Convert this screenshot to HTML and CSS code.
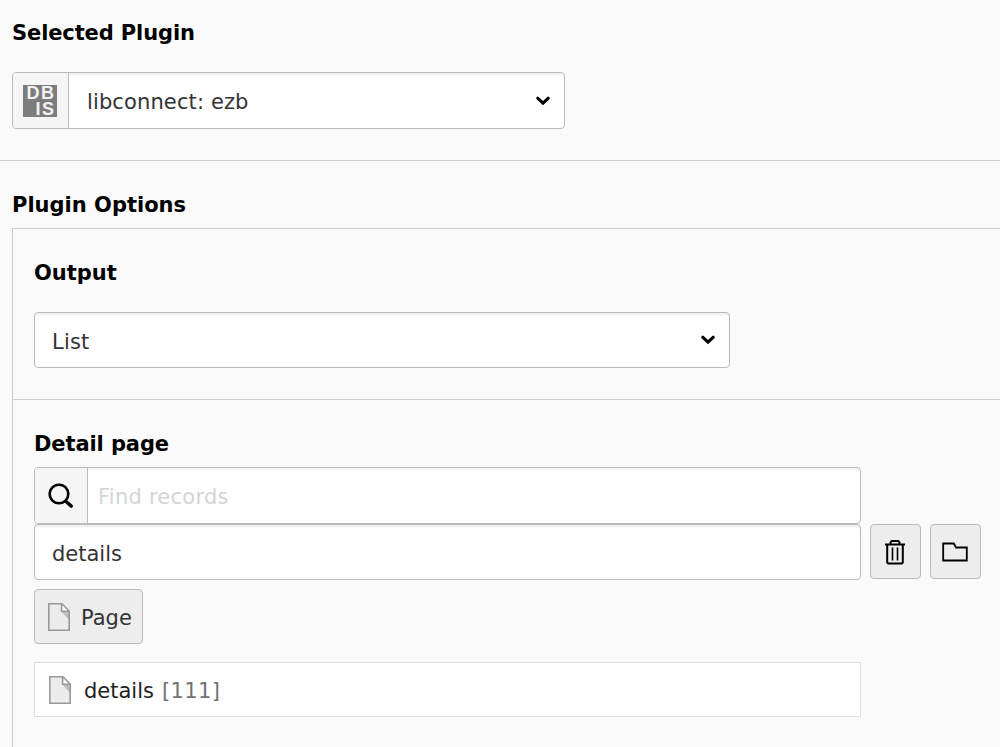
FILE: index.html
```html
<!DOCTYPE html>
<html lang="en">
<head>
<meta charset="utf-8">
<title>Plugin</title>
<link rel="stylesheet" href="styles.css">
</head>
<body>
<svg class="defs" width="0" height="0" aria-hidden="true">
  <symbol id="page" viewBox="0 0 22 28">
    <path d="M.8.8H14l7.200 7.400v19H.8z" fill="#ececec"/>
    <path d="M13 8.200h8v8.600z" fill="#bdbdbd"/>
    <path d="M13.600.9v7.300h7.400z" fill="#fff"/>
    <path d="M.8.8H14l7.200 7.400v19H.8zM13.600.8v7.400h7.600" fill="none" stroke="#999" stroke-width="1.600"/>
  </symbol>
  <symbol id="chevron" viewBox="0 0 16 12">
    <path d="M2.700 3.200 8 8.200l5.300-5" fill="none" stroke="#000" stroke-width="3" stroke-linecap="round"/>
  </symbol>
</svg>
<section class="plugin">
  <h2 class="label t-selected">Selected Plugin</h2>
  <div class="control plugin-select">
    <span class="addon"><span class="logo"><span>DB</span><span>IS</span></span></span>
    <span class="value t-lib">libconnect: ezb</span>
    <svg class="chevron"><use href="#chevron"/></svg>
  </div>
</section>
<section class="options">
  <h2 class="label">Plugin Options</h2>
  <div class="panel">
    <div class="output">
      <h3 class="label">Output</h3>
      <div class="control output-select">
        <span class="value t-list">List</span>
        <svg class="chevron"><use href="#chevron"/></svg>
      </div>
    </div>
    <div class="detail">
      <h3 class="label t-detail">Detail page</h3>
      <div class="control search">
        <span class="addon"><svg width="28" height="28" viewBox="0 0 28 28" fill="none" stroke="#000"><circle cx="12" cy="12" r="9.300" stroke-width="2.600"/><path d="m19 19.500 5.200 4.500" stroke-width="3.600" stroke-linecap="round"/></svg></span>
        <span class="placeholder t-find">Find records</span>
      </div>
      <div class="row">
        <div class="control record"><span class="value t-details">details</span></div>
        <span class="btn square"><svg width="22" height="26" viewBox="0 0 22 26" fill="none" stroke="#000"><path d="M1 5.500h20" stroke-width="2"/><path d="M6.500 5V3.300L7.800 2h6.400l1.300 1.300V5M3.200 5.500v18l1 1h13.600l1-1v-18" stroke-width="2"/><path d="M8.500 8.500v13M13.500 8.500v13" stroke-width="1.600"/></svg></span>
        <span class="btn square"><svg width="26" height="20" viewBox="0 0 26 20" fill="none" stroke="#000" stroke-width="1.800"><path d="M1.200 1.500h10.600l2.200 4h10.800v13H1.200z"/></svg></span>
      </div>
      <span class="btn page-btn"><svg class="page"><use href="#page"/></svg><span class="t-page">Page</span></span>
      <div class="item"><svg class="page"><use href="#page"/></svg><span class="t-item">details</span><span class="id">[111]</span></div>
    </div>
  </div>
</section>
</body>
</html>
```
FILE: styles.css
```css
* { box-sizing: border-box; }
body {
  margin: 0;
  height: 747px;
  overflow: hidden;
  background: #fafafa;
  color: #333;
  font: 21px/26px Verdana, "DejaVu Sans", sans-serif;
}
svg { display: block; flex: none; }
.defs { position: absolute; }
.label { margin: 0; font-size: 21px; line-height: 26px; font-weight: 700; color: #000; white-space: nowrap; }
.plugin { height: 161px; padding: 20px 0 0 12px; border-bottom: 1px solid #ccc; }
.control {
  display: flex;
  align-items: center;
  height: 56px;
  background: #fefefe;
  border: 1px solid #bbb;
  border-radius: 4px;
  box-shadow: inset 0 2px 2px rgba(0,0,0,.06);
  overflow: hidden;
  white-space: nowrap;
}
.plugin-select { width: 553px; height: 57px; margin-top: 26px; }
.addon {
  display: flex;
  flex: none;
  align-items: center;
  justify-content: center;
  width: 56px;
  height: 100%;
  background: #f5f5f5;
  border-right: 1px solid #bbb;
}
.logo {
  display: flex;
  flex-direction: column;
  align-items: flex-end;
  width: 34px;
  height: 32px;
  margin-right: 2px;
  padding-right: 1px;
  background: #7d7d7d;
  color: #f2f2f2;
  font: 700 18px/16px "Liberation Sans", sans-serif;
  letter-spacing: 1.5px;
}
.value { padding: 2px 0 0 18px; }
.chevron { width: 16px; height: 12px; margin: 0 13px 0 auto; }
.options { padding: 31px 0 0 12px; }
.panel { height: 530px; margin-top: 10px; border: solid #ccc; border-width: 1px 0 0 1px; }
.output { height: 171px; padding: 31px 0 0 21px; border-bottom: 1px solid #ccc; }
.output-select { width: 696px; margin-top: 26px; }
.detail { padding: 31px 0 0 21px; }
.search { width: 827px; height: 57px; margin-top: 10px; }
.search .addon { width: 53px; }
.placeholder { padding: 2px 0 0 10px; color: #d5d5d5; }
.row { display: flex; gap: 9px; }
.record { width: 827px; }
.btn {
  display: flex;
  align-items: center;
  justify-content: center;
  height: 55px;
  background: #ededed;
  border: 1px solid #bbb;
  border-radius: 4px;
}
.square { width: 51px; padding-right: 1px; }
.page { width: 22px; height: 28px; }
.page-btn { width: 109px; margin-top: 9px; padding-left: 13px; justify-content: flex-start; gap: 11px; }
.item {
  display: flex;
  align-items: center;
  width: 827px;
  height: 55px;
  margin-top: 18px;
  padding-left: 14px;
  background: #fff;
  border: 1px solid #ddd;
  color: #212121;
}
.t-item { margin-left: 13px; padding-top: 2px; }
.t-page { padding-top: 2px; }
.id { margin-left: 8px; padding-top: 2px; color: #737373; letter-spacing: .4px; }
.t-selected { letter-spacing: -.12px; }
.t-detail { letter-spacing: -.1px; }
.t-lib { letter-spacing: .12px; }
.t-find { letter-spacing: .25px; }
.t-list, .t-details { padding: 3px 0 0 17px; }
.t-list { letter-spacing: .2px; }
```
